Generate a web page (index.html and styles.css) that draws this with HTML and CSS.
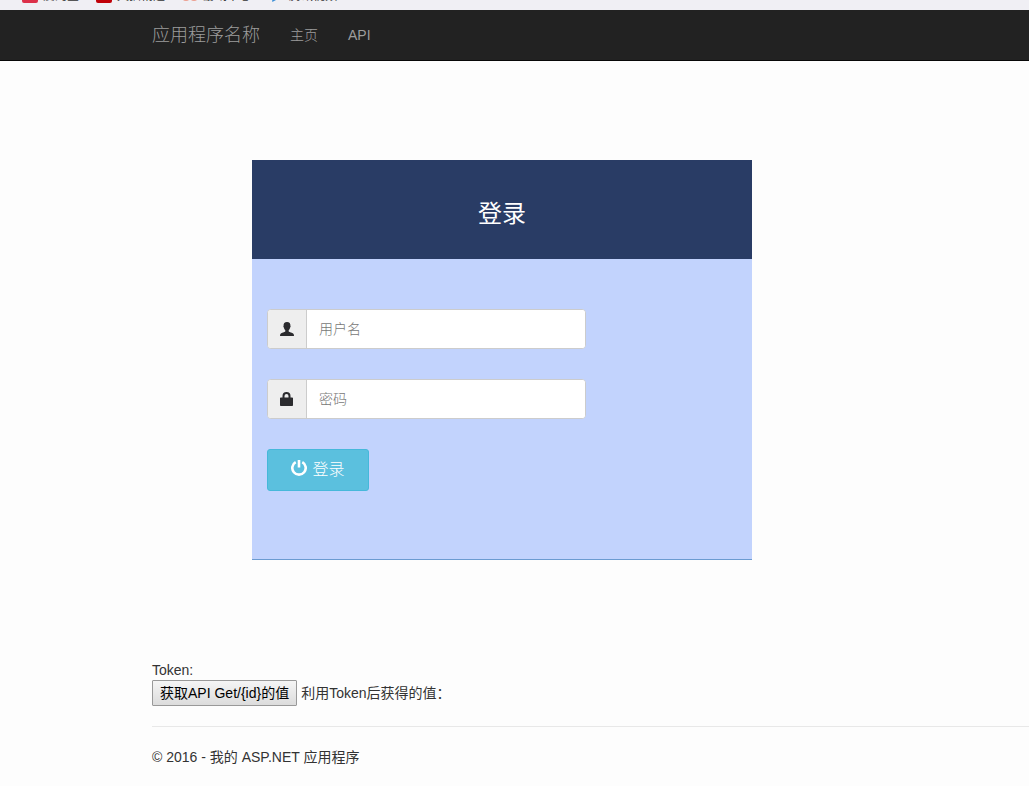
FILE: index.html
```html
<!DOCTYPE html>
<html lang="zh-CN">
<head>
    <meta charset="UTF-8">
    <meta name="viewport" content="width=device-width, initial-scale=1.0">
    <title>登录 - 我的 ASP.NET 应用程序</title>
    <link rel="stylesheet" href="styles.css">
</head>
<body>

<div class="bookmarks">
    <span class="bookmark"><i class="mark mark-red"></i>爱淘宝</span>
    <span class="bookmark"><i class="mark mark-dark"></i>天猫精选</span>
    <span class="bookmark"><i class="mark mark-rings"><b></b><b></b></i>游戏中心</span>
    <span class="bookmark"><svg class="mark" viewBox="0 0 16 16"><path fill="#3d8fd6" d="M4 1v14L15 9z"/></svg>腾讯视频</span>
</div>

<nav class="navbar">
    <a class="navbar-brand" href="#">应用程序名称</a>
    <a class="navbar-link" href="#">主页</a>
    <a class="navbar-link" href="#">API</a>
</nav>

<main class="body-content">
    <section class="login">
        <h1 class="login-title">登录</h1>
        <form class="login-form">
            <div class="input-group">
                <label class="addon" for="username" aria-label="用户名">
                    <svg width="14" height="14" viewBox="0 0 14 14" fill="#2b2b2e"><path d="M7 0C4.500 0 3.400 1.500 3.600 3.700c-.4.300-.2 1.500.3 1.800.2 1.300.7 2.100 1.400 2.700v1.300C4.700 10.300 1.500 10.700.6 11.700.1 12.300 0 13 0 14h14c0-1-.1-1.700-.6-2.300-.9-1-4.100-1.400-4.700-2.200V8.200c.7-.6 1.200-1.400 1.400-2.700.5-.3.7-1.500.3-1.800C10.600 1.500 9.500 0 7 0z"/></svg>
                </label>
                <input class="form-control" type="text" id="username" placeholder="用户名">
            </div>
            <div class="input-group">
                <label class="addon" for="password" aria-label="密码">
                    <svg width="14" height="14" viewBox="0 0 14 14" fill="#2b2b2e"><path fill-rule="evenodd" d="M2.500 5.500V4a4 4 0 0 1 8 0v1.500h1.700c.5 0 .8.300.8.800v6.900c0 .5-.3.800-.8.800H.8c-.5 0-.8-.3-.8-.8V6.300c0-.5.3-.8.8-.8zM4.500 5.500h4V4a2 2 0 0 0-4 0z"/></svg>
                </label>
                <input class="form-control" type="password" id="password" placeholder="密码">
            </div>
            <button class="btn-login" type="button">
                <svg width="16" height="16" viewBox="0 0 16 16" fill="none" stroke="#fff" stroke-width="2.600"><path d="M4.700 2.100a6.700 6.700 0 1 0 6.600 0M8 0v7.500"/></svg>
                登录
            </button>
        </form>
    </section>

    <div>Token:</div>
    <div class="token-row">
        <button class="btn-get" type="button">获取API Get/{id}的值</button>
        <span>利用Token后获得的值：</span>
    </div>
    <hr>
    <footer>© 2016 - 我的 ASP.NET 应用程序</footer>
</main>

</body>
</html>
```
FILE: styles.css
```css
* {
    box-sizing: border-box;
}

body {
    margin: 0;
    font-family: "Liberation Sans", "Noto Sans CJK SC", sans-serif;
    font-size: 14px;
    line-height: 20px;
    color: #333;
    background-color: #fdfdfd;
}

/* 书签栏 */
.bookmarks {
    display: flex;
    align-items: flex-end;
    gap: 17px;
    height: 10px;
    padding: 0 22px 6px;
    overflow: hidden;
    background-color: #f0eff4;
    font-size: 12px;
    line-height: 16px;
}

.bookmark {
    display: flex;
    flex-shrink: 0;
    gap: 5px;
}

.mark {
    display: flex;
    width: 16px;
    height: 15px;
    border-radius: 2px;
}

.mark-red {
    background-color: #dc3049;
}

.mark-dark {
    background-color: #c00008;
}

.mark-rings b {
    width: 8px;
    height: 13px;
    border: 2px solid #ec9f90;
    border-radius: 4px;
}

/* 导航栏 */
.navbar {
    display: flex;
    align-items: center;
    gap: 30px;
    height: 51px;
    padding-left: 152px;
    border-bottom: 1px solid #080808;
    background-color: #222;
    font-weight: 300;
}

.navbar a {
    color: #9d9d9d;
    text-decoration: none;
}

.navbar .navbar-brand {
    font-size: 18px;
}

/* 页面内容 */
.body-content {
    padding-left: 152px;
}

.login {
    max-width: 500px;
    min-height: 400px;
    margin: 99px 100px 100px;
    border-bottom: 1px solid #6b9bd1;
    background-color: #c2d3fd;
}

.login-title {
    margin: 0;
    padding: 40px 0 32px;
    background-color: #293c65;
    color: #fff;
    font-size: 24px;
    font-weight: 400;
    line-height: 27px;
    text-align: center;
}

.login-form {
    padding: 50px 15px;
}

.input-group {
    display: flex;
    max-width: 319px;
    height: 40px;
    margin-bottom: 30px;
    border: 1px solid #ccc;
    border-radius: 4px;
    overflow: hidden;
    background-color: #fff;
}

.addon {
    display: flex;
    align-items: center;
    justify-content: center;
    width: 39px;
    border-right: 1px solid #ccc;
    background-color: #eee;
}

.form-control {
    flex: 1;
    min-width: 0;
    padding: 0 12px;
    border: none;
    background-color: #fff;
    font-family: inherit;
    font-size: 14px;
    font-weight: 300;
}

.form-control::placeholder {
    color: #777;
}

.btn-login {
    display: flex;
    align-items: center;
    justify-content: center;
    gap: 5px;
    width: 102px;
    height: 42px;
    padding: 0 0 4px;
    border: 1px solid #46b8da;
    border-radius: 3px;
    background-color: #5bc0de;
    color: #fff;
    font-family: inherit;
    font-size: 16px;
    font-weight: 300;
    cursor: pointer;
}

/* 获取接口数据 */
.token-row {
    display: flex;
    align-items: center;
    gap: 4px;
}

.btn-get {
    height: 26px;
    padding: 0 7px 2px;
    border: 1px solid #999;
    border-radius: 1px;
    background: linear-gradient(#f5f5f5, #dcdcdc);
    color: #000;
    font-family: inherit;
    font-size: 14px;
}

hr {
    margin: 20px 0;
    border: 0;
    border-top: 1px solid #e8e8e8;
}
```
